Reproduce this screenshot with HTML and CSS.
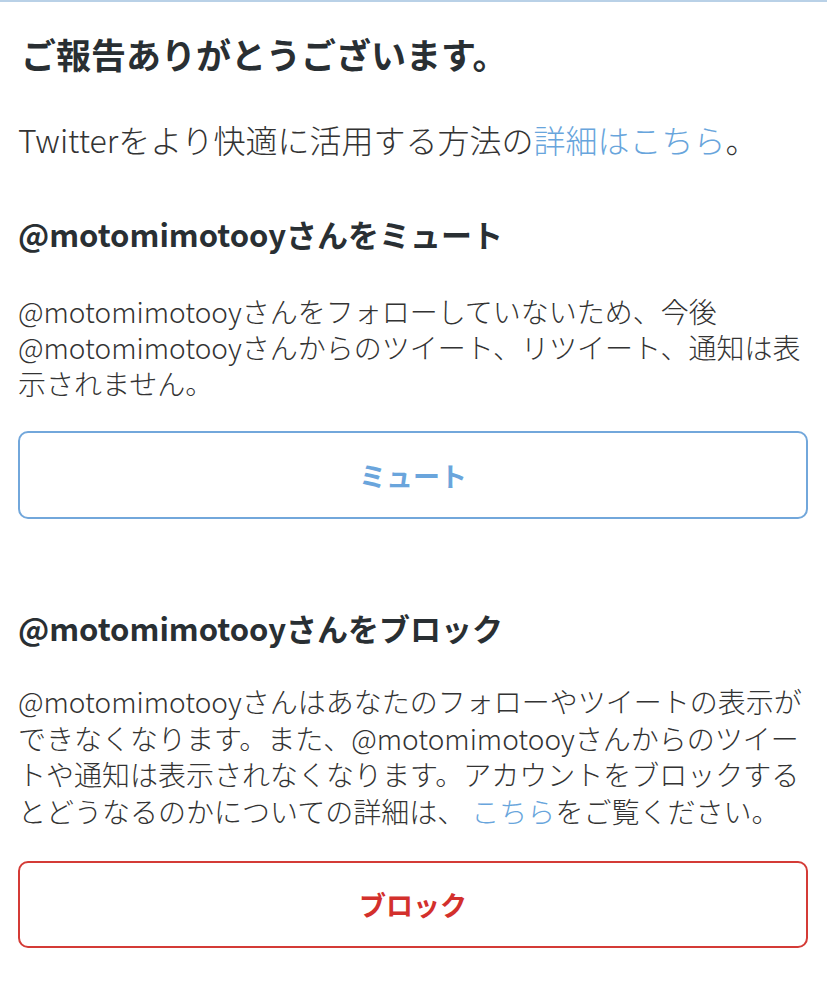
FILE: index.html
```html
<!DOCTYPE html>
<html lang="ja">
<head>
    <meta charset="UTF-8">
    <meta name="viewport" content="width=device-width, initial-scale=1.0">
    <title>ご報告ありがとうございます</title>
    <link rel="stylesheet" href="styles.css">
</head>
<body>
    <div class="container">
        <h2 class="title">ご報告ありがとうございます。</h2>
        <p class="lead">Twitterをより快適に活用する方法の<a href="#">詳細はこちら</a>。</p>

        <div class="section mute-section">
            <h3>@motomimotooyさんをミュート</h3>
            <p class="desc">@motomimotooyさんをフォローしていないため、今後@motomimotooyさんからのツイート、リツイート、通知は表示されません。</p>
            <button class="action mute">ミュート</button>
        </div>

        <div class="section block-section">
            <h3>@motomimotooyさんをブロック</h3>
            <p class="desc">@motomimotooyさんはあなたのフォローやツイートの表示ができなくなります。また、@motomimotooyさんからのツイートや通知は表示されなくなります。アカウントをブロックするとどうなるのかについての詳細は、 <a href="#">こちら</a>をご覧ください。</p>
            <button class="action block">ブロック</button>
        </div>
    </div>
</body>
</html>
```

FILE: styles.css
```css
body {
    margin: 0;
    font-family: "Noto Sans CJK JP", "Noto Sans", sans-serif;
    color: #292f33;
    background: #fff;
}
.container {
    border-top: 2px solid #b9d1e7;
    padding: 0 19px 0 18px;
}
a {
    color: #68a5dc;
    text-decoration: none;
}
.title {
    margin: 30px 0 0 3px;
    font-size: 35px;
    line-height: 44px;
    font-weight: bold;
}
.lead {
    margin: 43px 0 0;
    font-size: 32px;
    line-height: 40px;
    font-weight: 300;
    color: #333;
}
.section h3 {
    margin: 0;
    font-size: 31px;
    line-height: 40px;
    font-weight: bold;
}
.mute-section {
    margin-top: 55px;
}
.block-section {
    margin-top: 89px;
}
.desc {
    margin: 39px 0 0;
    font-size: 28px;
    line-height: 36px;
    font-weight: 300;
    color: #333;
}
.block-section .desc {
    margin-top: 35px;
    line-height: 36.5px;
}
.action {
    display: block;
    width: 100%;
    height: 88px;
    margin-top: 30px;
    background: #fff;
    border: 2px solid;
    border-radius: 10px;
    font-family: inherit;
    font-size: 27px;
    font-weight: bold;
    cursor: pointer;
}
.mute {
    color: #6aa5dc;
    border-color: #72a7db;
}
.block {
    margin-top: 32px;
    height: 87px;
    color: #d3302c;
    border-color: #d43b36;
}
```
